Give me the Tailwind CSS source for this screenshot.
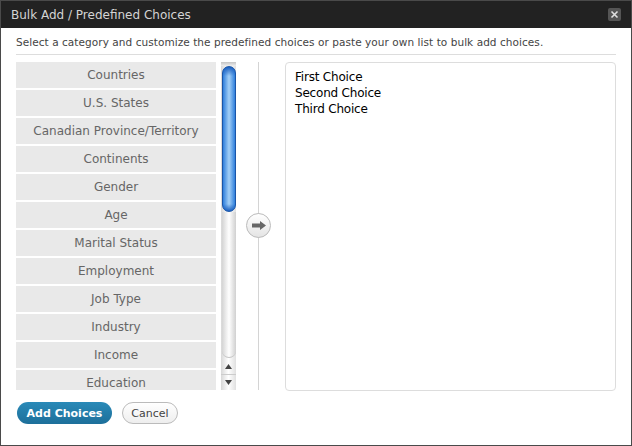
<!DOCTYPE html>
<html lang="en">
<head>
    <meta charset="UTF-8">
    <title>Bulk Add / Predefined Choices</title>
    <script src="https://cdn.jsdelivr.net/npm/@tailwindcss/browser@4"></script>
</head>
<body class="bg-white">
    <div class="w-[632px] h-[446px] bg-white border border-[#4a4a4a] font-['DejaVu_Sans',sans-serif] overflow-hidden">
        <!-- Title bar -->
        <div class="h-[27px] bg-[#222222] flex items-center justify-between pl-[10px] pr-[10px] text-[#d4d4d4] text-[12px]">
            <span>Bulk Add / Predefined Choices</span>
            <button class="w-[13px] h-[13px] bg-[#555555] rounded-[2px] flex items-center justify-center">
                <svg width="9" height="9" viewBox="0 0 9 9"><path d="M1.5 1.5l6 6M7.5 1.5l-6 6" stroke="#e0e0e0" stroke-width="1.6"/></svg>
            </button>
        </div>

        <div class="px-[15px]">
            <p class="h-[27px] pt-[7px] leading-[14px] text-[10.5px] tracking-[0.06px] text-[#444444] border-b border-[#dddddd] w-[600px] whitespace-nowrap">Select a category and customize the predefined choices or paste your own list to bulk add choices.</p>

            <div class="flex mt-[7px] h-[329px]">
                <!-- Category list -->
                <ul class="w-[200px] h-[328px] overflow-hidden flex flex-col gap-[2px] text-[12px] text-[#666666] text-center">
                    <li class="h-[26px] shrink-0 leading-[27px] bg-[#e9e9e9]">Countries</li>
                    <li class="h-[26px] shrink-0 leading-[27px] bg-[#e9e9e9]">U.S. States</li>
                    <li class="h-[26px] shrink-0 leading-[27px] bg-[#e9e9e9]">Canadian Province/Territory</li>
                    <li class="h-[26px] shrink-0 leading-[27px] bg-[#e9e9e9]">Continents</li>
                    <li class="h-[26px] shrink-0 leading-[27px] bg-[#e9e9e9]">Gender</li>
                    <li class="h-[26px] shrink-0 leading-[27px] bg-[#e9e9e9]">Age</li>
                    <li class="h-[26px] shrink-0 leading-[27px] bg-[#e9e9e9]">Marital Status</li>
                    <li class="h-[26px] shrink-0 leading-[27px] bg-[#e9e9e9]">Employment</li>
                    <li class="h-[26px] shrink-0 leading-[27px] bg-[#e9e9e9]">Job Type</li>
                    <li class="h-[26px] shrink-0 leading-[27px] bg-[#e9e9e9]">Industry</li>
                    <li class="h-[26px] shrink-0 leading-[27px] bg-[#e9e9e9]">Income</li>
                    <li class="h-[26px] shrink-0 leading-[27px] bg-[#e9e9e9]">Education</li>
                </ul>

                <!-- Scrollbar -->
                <div class="ml-[5px] w-[15px] h-[328px] flex flex-col bg-gradient-to-r from-[#d8d8d8] via-white to-[#e0e0e0]">
                    <div class="h-[4px] bg-gradient-to-b from-[#c4c4c4] to-[#eeeeee]"></div>
                    <div class="ml-[1px] h-[146px] rounded-[7px] border border-[#1a56a8] bg-[linear-gradient(to_bottom,#1a5fc0_0,transparent_9px,transparent_calc(100%-7px),#1a5fc0_100%),linear-gradient(to_right,#2f7fdc,#a4d0f6,#2f7fdc)]"></div>
                    <div class="ml-[1px] h-[146px] rounded-b-[7px] bg-gradient-to-r from-[#d4d4d4] via-white to-[#d0d0d0] border-b border-[#c4c4c4]"></div>
                    <div class="flex-1 flex flex-col justify-end">
                        <div class="h-[15px] flex items-center justify-center pb-[2px] border-b border-[#cccccc]">
                            <svg width="7" height="5" viewBox="0 0 7 5"><path d="M3.500 0l3.500 5H0z" fill="#444444"/></svg>
                        </div>
                        <div class="h-[15px] flex items-center justify-center pb-[1px]">
                            <svg width="7" height="5" viewBox="0 0 7 5"><path d="M0 0h7L3.500 5z" fill="#444444"/></svg>
                        </div>
                    </div>
                </div>

                <!-- Divider with arrow -->
                <div class="relative ml-[22px] w-px h-[328px] bg-[#d4d4d4]">
                    <div class="absolute left-[-12px] top-[151px] w-[25px] h-[25px] rounded-full border border-[#bbbbbb] bg-gradient-to-b from-white to-[#e4e4e4] flex items-center justify-center">
                        <svg width="14" height="9" viewBox="0 0 14 9"><path d="M0 2.500h8V0l6 4.500-6 4.500V6.500H0z" fill="#666666"/></svg>
                    </div>
                </div>

                <!-- Paste box -->
                <div class="ml-[26px] w-[331px] h-[329px] border border-[#dddddd] rounded-[4px] px-[9px] py-[6px] text-[12px] tracking-[-0.2px] leading-[16px] text-black">
                    <p>First Choice</p>
                    <p>Second Choice</p>
                    <p>Third Choice</p>
                </div>
            </div>

            <!-- Actions -->
            <div class="flex items-center gap-[10px] mt-[11px] ml-[1px]">
                <button class="w-[95px] h-[22px] pt-[2px] rounded-full bg-gradient-to-b from-[#2a8ab8] to-[#1d6f9a] text-white text-[11px] font-bold">Add Choices</button>
                <button class="w-[56px] h-[22px] pt-[2px] rounded-full border border-[#bbbbbb] bg-gradient-to-b from-white to-[#eeeeee] text-[#444444] text-[11px]">Cancel</button>
            </div>
        </div>
    </div>
</body>
</html>
